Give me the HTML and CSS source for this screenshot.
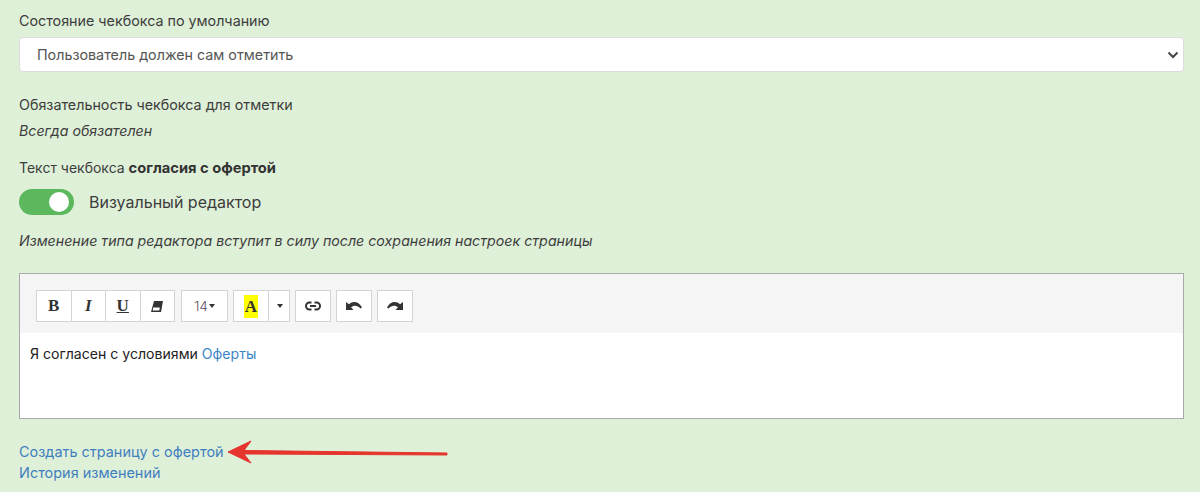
FILE: index.html
```html
<!DOCTYPE html>
<html lang="ru">
<head>
  <meta charset="UTF-8" />
  <title>Настройки чекбокса</title>
  <link rel="stylesheet" href="styles.css">
</head>
<body>
  <div class="container">
    <div class="label first">Состояние чекбокса по умолчанию</div>
    <div class="select">
      <span>Пользователь должен сам отметить</span>
      <svg class="chevron" width="12" height="8" viewBox="0 0 12 8"><path d="M1.500 1.500 6 6l4.500-4.500" fill="none" stroke="#444" stroke-width="2"/></svg>
    </div>

    <div class="label required">Обязательность чекбокса для отметки</div>
    <div class="note always">Всегда обязателен</div>

    <div class="label text">Текст чекбокса <b>согласия с офертой</b></div>
    <div class="toggle-row">
      <div class="toggle"><div class="knob"></div></div>
      <span>Визуальный редактор</span>
    </div>
    <div class="note change">Изменение типа редактора вступит в силу после сохранения настроек страницы</div>

    <div class="editor">
      <div class="toolbar">
        <div class="group">
          <div class="btn"><span class="serif">B</span></div>
          <div class="btn"><span class="serif italic">I</span></div>
          <div class="btn"><span class="serif under">U</span></div>
          <div class="btn">
            <svg width="12" height="11" viewBox="0 0 12 11"><path d="M3 0h9l-2 11H0z" fill="#333"/><path d="M2.200 6.500h6.600L8.300 9.500H1.700z" fill="#fff"/></svg>
          </div>
        </div>
        <div class="group size-group">
          <div class="btn size"><span class="num">14</span><i class="caret"></i></div>
        </div>
        <div class="group">
          <div class="btn wide"><span class="serif marker">A</span></div>
          <div class="btn narrow"><i class="caret"></i></div>
        </div>
        <div class="group">
          <div class="btn">
            <svg width="16" height="10" viewBox="0 0 16 10"><path d="M6.500 1.500H4.500a3.500 3.500 0 0 0 0 7h2M9.500 1.500h2a3.500 3.500 0 0 1 0 7h-2M5 5h6" fill="none" stroke="#333" stroke-width="2"/></svg>
          </div>
        </div>
        <div class="group">
          <div class="btn wide">
            <svg width="16" height="10" viewBox="0 0 16 10"><path d="M0 1v8h7.500L5 6.300C7.500 4 11.500 4 14.500 7.500L16 6.500C12.500 0 7 -0.500 3 3.200z" fill="#333"/></svg>
          </div>
        </div>
        <div class="group">
          <div class="btn wide">
            <svg width="16" height="10" viewBox="0 0 16 10"><path d="M16 1v8H8.500L11 6.300C8.500 4 4.500 4 1.500 7.500L0 6.500C3.500 0 9 -0.500 13 3.200z" fill="#333"/></svg>
          </div>
        </div>
      </div>
      <div class="content">Я согласен с условиями <a href="#">Оферты</a></div>
    </div>

    <div class="links">
      <a href="#">Создать страницу с офертой</a>
      <a href="#">История изменений</a>
    </div>
  </div>

  <!-- red annotation arrow drawn over the screenshot -->
  <svg class="arrow" width="224" height="30" viewBox="0 0 224 30">
    <path d="M0 13 L23 2 L16 11.500 L219 14 L219 16 L16 15 L23 24 Z" fill="#e5352d" stroke="#e5352d" stroke-width="1" stroke-linejoin="round"/>
  </svg>
</body>
</html>
```

FILE: styles.css
```css
body {
  margin: 0;
  height: 492px;
  overflow: hidden;
  background-color: #dff0d8;
  font-family: 'Inter', 'Noto Sans', sans-serif;
  font-size: 14.3px;
  color: #3d3d3d;
  position: relative;
}

.container {
  padding: 0 16px 0 19px;
}

.label {
  line-height: 20px;
}

.first {
  padding-top: 11px;
}

.select {
  margin-top: 6px;
  height: 35px;
  box-sizing: border-box;
  background-color: #fff;
  border: 1px solid #dcdcdc;
  border-radius: 4px;
  padding: 0 4px 0 17px;
  display: flex;
  align-items: center;
  justify-content: space-between;
  color: #555;
}

.required {
  margin-top: 23px;
}

.note {
  font-style: italic;
  font-size: 14.2px;
  line-height: 20px;
}

.always {
  margin-top: 6px;
}

.text {
  margin-top: 17px;
  font-size: 14px;
}

.text b {
  font-weight: 700;
  font-size: 14.7px;
  color: #333;
}

.toggle-row {
  margin-top: 11px;
  display: flex;
  align-items: center;
  gap: 15px;
  font-size: 16px;
}

.toggle {
  width: 55px;
  height: 26px;
  border-radius: 13px;
  background-color: #5cb85c;
  position: relative;
}

.knob {
  position: absolute;
  top: 3px;
  right: 5px;
  width: 20px;
  height: 20px;
  border-radius: 50%;
  background-color: #fff;
}

.change {
  margin-top: 16px;
}

.editor {
  margin-top: 22px;
  border: 1px solid #a9a9a9;
  background-color: #fff;
}

.toolbar {
  background-color: #f5f5f5;
  height: 59px;
  box-sizing: border-box;
  padding: 16px 0 0 16px;
  display: flex;
  gap: 5px;
}

.group {
  display: flex;
  height: 32px;
}

.size-group {
  margin-left: 1px;
}

.btn {
  width: 35.500px;
  box-sizing: border-box;
  background-color: #fff;
  border: 1px solid #d4d4d4;
  margin-right: -1px;
  display: flex;
  align-items: center;
  justify-content: center;
  color: #333;
}

.group .btn:last-child {
  margin-right: 0;
}

.serif {
  font-family: 'Liberation Serif', serif;
  font-weight: 700;
  font-size: 17px;
  line-height: 18px;
}

.italic {
  font-style: italic;
}

.under {
  text-decoration: underline;
}

.marker {
  background-color: #ffff00;
  padding: 0 1px;
  line-height: 23px;
}

.wide {
  width: 36px;
}

.narrow {
  width: 22px;
}

.size {
  width: 47px;
}

.num {
  font-size: 13px;
  font-weight: 300;
  color: #5b4a5e;
}

.caret {
  display: inline-block;
  border-top: 4px solid #333;
  border-left: 3px solid transparent;
  border-right: 3px solid transparent;
  margin-left: 1px;
}

.content {
  height: 85px;
  box-sizing: border-box;
  padding: 11px 10px;
  font-size: 14.1px;
  line-height: 20px;
  color: #222;
}

a {
  color: #3d85c6;
  text-decoration: none;
}

.links {
  margin-top: 22px;
  display: flex;
  flex-direction: column;
  line-height: 21px;
  font-size: 14.450px;
}

.links a {
  color: #3f7fbf;
}

.arrow {
  position: absolute;
  left: 228px;
  top: 439px;
}
```
